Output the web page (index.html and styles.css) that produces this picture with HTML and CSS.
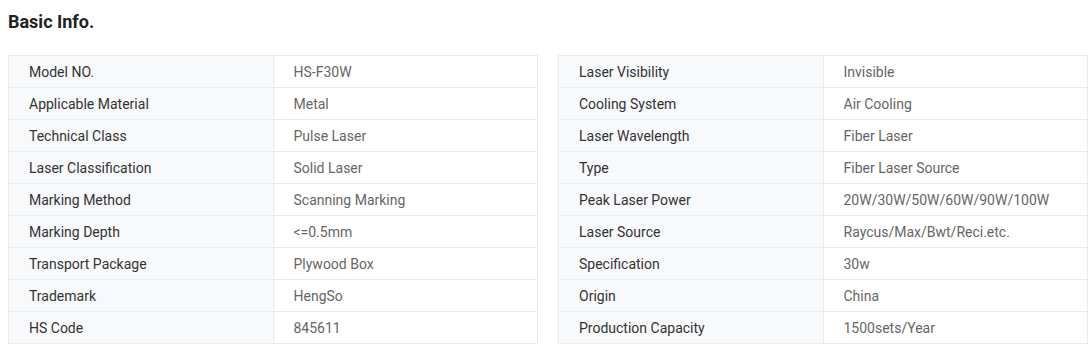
FILE: index.html
```html
<!DOCTYPE html>
<html>
<head>
<meta charset="utf-8">
<link rel="stylesheet" href="styles.css">
</head>
<body>
<div class="wrap">
  <h2 class="title">Basic Info.</h2>
  <div class="tables">
    <table class="info">
      <tr><td class="k">Model NO.</td><td class="v">HS-F30W</td></tr>
      <tr><td class="k">Applicable Material</td><td class="v">Metal</td></tr>
      <tr><td class="k">Technical Class</td><td class="v">Pulse Laser</td></tr>
      <tr><td class="k">Laser Classification</td><td class="v">Solid Laser</td></tr>
      <tr><td class="k">Marking Method</td><td class="v">Scanning Marking</td></tr>
      <tr><td class="k">Marking Depth</td><td class="v">&lt;=0.5mm</td></tr>
      <tr><td class="k">Transport Package</td><td class="v">Plywood Box</td></tr>
      <tr><td class="k">Trademark</td><td class="v">HengSo</td></tr>
      <tr><td class="k">HS Code</td><td class="v">845611</td></tr>
    </table>
    <table class="info">
      <tr><td class="k">Laser Visibility</td><td class="v">Invisible</td></tr>
      <tr><td class="k">Cooling System</td><td class="v">Air Cooling</td></tr>
      <tr><td class="k">Laser Wavelength</td><td class="v">Fiber Laser</td></tr>
      <tr><td class="k">Type</td><td class="v">Fiber Laser Source</td></tr>
      <tr><td class="k">Peak Laser Power</td><td class="v">20W/30W/50W/60W/90W/100W</td></tr>
      <tr><td class="k">Laser Source</td><td class="v">Raycus/Max/Bwt/Reci.etc.</td></tr>
      <tr><td class="k">Specification</td><td class="v">30w</td></tr>
      <tr><td class="k">Origin</td><td class="v">China</td></tr>
      <tr><td class="k">Production Capacity</td><td class="v">1500sets/Year</td></tr>
    </table>
  </div>
</div>
</body>
</html>
```
FILE: styles.css
```css
html, body {
  margin: 0;
  padding: 0;
  background: #fff;
}
body {
  font-family: Roboto, "Liberation Sans", sans-serif;
  padding: 0 2px 0 8px;
}
.wrap {
  width: 1080px;
}
.title {
  margin: 0;
  padding-top: 11px;
  height: 55px;
  box-sizing: border-box;
  font-size: 18px;
  line-height: 22px;
  font-weight: 700;
  color: #222;
}
.tables {
  display: flex;
  gap: 20px;
}
.info {
  width: 530px;
  border-collapse: collapse;
  table-layout: fixed;
}
.info td {
  border: 1px solid #e8ebf0;
  height: 31px;
  padding: 0 0 0 20px;
  font-size: 14px;
  line-height: 16px;
  vertical-align: middle;
  white-space: nowrap;
}
.info td.k {
  background: #f8f9fb;
  color: #333;
}
.info td.v {
  background: #fff;
  color: #666;
}
```
